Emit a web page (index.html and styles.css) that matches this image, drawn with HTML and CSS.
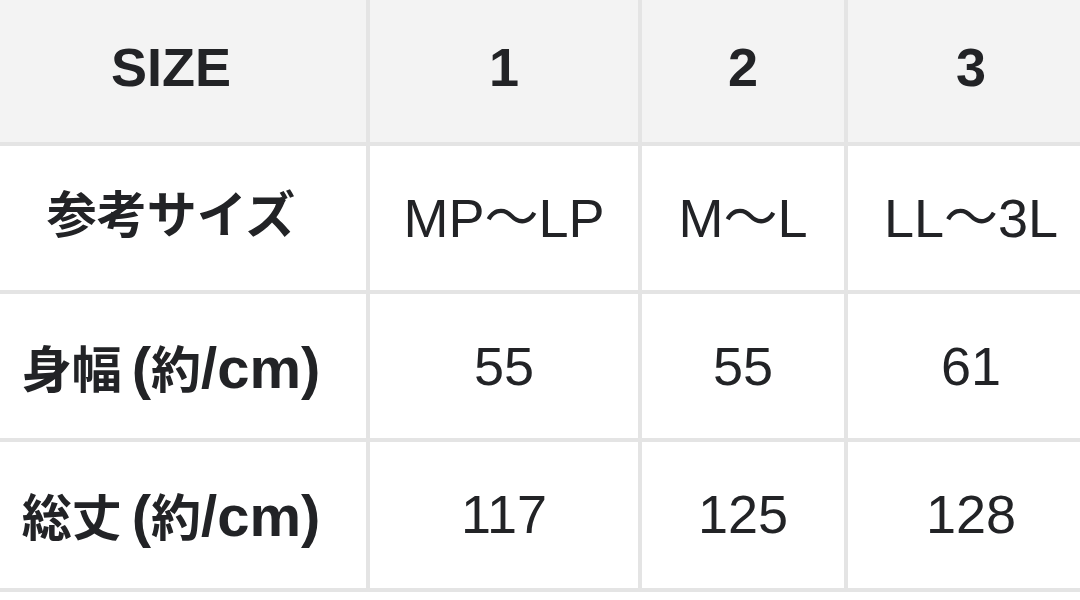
FILE: index.html
```html
<!DOCTYPE html>
<html lang="ja">
<head>
<meta charset="utf-8">
<link rel="stylesheet" href="styles.css">
</head>
<body>
<div class="frame">
  <div class="table">
    <div class="cell head label">SIZE</div>
    <div class="cell head">1</div>
    <div class="cell head">2</div>
    <div class="cell head">3</div>

    <div class="cell label">参考サイズ</div>
    <div class="cell">MP〜LP</div>
    <div class="cell">M〜L</div>
    <div class="cell">LL〜3L</div>

    <div class="cell label">身幅<span class="unit open">(</span>約<span class="unit">/cm)</span></div>
    <div class="cell">55</div>
    <div class="cell">55</div>
    <div class="cell">61</div>

    <div class="cell label">総丈<span class="unit open">(</span>約<span class="unit">/cm)</span></div>
    <div class="cell">117</div>
    <div class="cell">125</div>
    <div class="cell">128</div>
  </div>
</div>
</body>
</html>
```

FILE: styles.css
```css
html, body {
  margin: 0;
  padding: 0;
  background: #ffffff;
}
body {
  width: 1080px;
  height: 600px;
  overflow: hidden;
  font-family: "Liberation Sans", "Noto Sans CJK JP", sans-serif;
  color: #222326;
}
.frame {
  margin-left: -24px;
  width: 1118px;
}
.table {
  display: grid;
  grid-template-columns: 390px 268px 202px 246px;
  grid-template-rows: 142px 144px 144px 146px;
  gap: 4px;
  background: #e4e4e4;
  padding-bottom: 4px;
}
.cell {
  background: #ffffff;
  display: flex;
  align-items: baseline;
  justify-content: center;
  font-size: 54px;
  font-weight: 400;
  line-height: 1;
  padding-top: 45px;
  white-space: nowrap;
  box-sizing: border-box;
}
.head {
  background: #f3f3f3;
  font-weight: 700;
  padding-top: 40px;
}
.label {
  font-weight: 700;
  font-size: 50px;
}
.head.label {
  font-size: 54px;
}
.unit {
  font-size: 58px;
  line-height: 1;
}
.open {
  margin-left: 10px;
}
```
